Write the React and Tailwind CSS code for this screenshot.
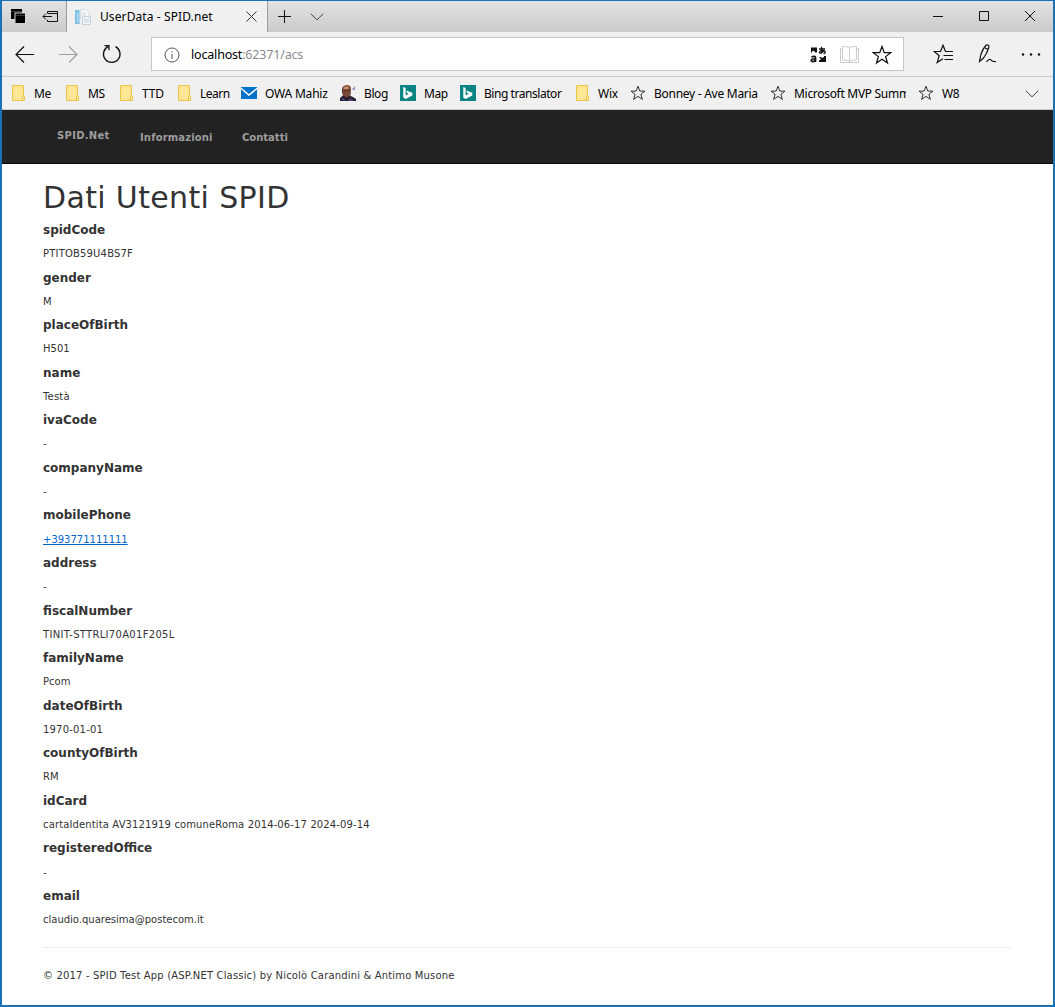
import React from 'react';

const rows = [
  ['spidCode', 'PTITOB59U4BS7F', 'tracking-[0.18px]'],
  ['gender', 'M', ''],
  ['placeOfBirth', 'H501', ''],
  ['name', 'Testà', 'tracking-[0.2px]'],
  ['ivaCode', '-', ''],
  ['companyName', '-', ''],
  ['mobilePhone', '+393771111111', ''],
  ['address', '-', ''],
  ['fiscalNumber', 'TINIT-STTRLI70A01F205L', 'tracking-[0.31px]'],
  ['familyName', 'Pcom', ''],
  ['dateOfBirth', '1970-01-01', 'tracking-[0.2px]'],
  ['countyOfBirth', 'RM', ''],
  ['idCard', 'cartaIdentita AV3121919 comuneRoma 2014-06-17 2024-09-14', 'tracking-[0.13px]'],
  ['registeredOffice', '-', ''],
  ['email', 'claudio.quaresima@postecom.it', ''],
];

const STAR = 'M8 1.2 9.8 6.1H15L10.9 9.3 12.4 14.4 8 11.4 3.6 14.4 5.1 9.3 1 6.1H6.2Z';

const Folder = () => (
  <svg width="14" height="16" viewBox="0 0 14 16" fill="#ffe694" stroke="#e9c548">
    <path d="M.5.5h11v9.7l1 1v4.3H.5Z" />
    <path d="M10.5 15.500v-4l1-1.300" fill="none" />
  </svg>
);
const Mail = () => (
  <svg width="16" height="12" viewBox="0 0 16 12">
    <path d="M0 0h16v12H0Z" fill="#0072c9" />
    <path d="M0 .4 8 7 16 .4V2.300L8 9 0 2.300Z" fill="#fff" />
    <path d="M0 0h16L8 6.500Z" fill="#0072c9" />
  </svg>
);
const Avatar = () => (
  <svg width="16" height="16" viewBox="0 0 16 16">
    <path d="M0 16v-3l3-2.500 4-.5 5 1.500 4 2.500v2Z" fill="#20202e" />
    <path d="M2 3.500Q3 0 7 0t4 4l-.3 4.500L8.500 12 5 12.500 2.500 9Z" fill="#794735" />
    <path d="M3.500 3Q5 .6 8.500 1.500L9 4 4 4.500Z" fill="#c28a68" />
    <path d="M2 4h1v6l3 2.500 3-1 1.500-3-.3 4L6 14l-3-3Z" fill="#35202a" />
    <path d="M4.500 5.500h1.500M8 5.500h1.500" stroke="#2c1c20" />
    <path d="m1 14 2-1 2 2-1 1Zm7 1 3-1.500 2 1.500v1H8Z" fill="#58427c" />
    <path d="M12.500 3h1.200V1.500H15V5h-2.500Z" fill="#8d9cc5" />
  </svg>
);
const Bing = () => (
  <svg width="16" height="16" viewBox="0 0 16 16">
    <path d="M0 0h16v16H0Z" fill="#0c8484" />
    <path d="M3.300 2 5.600 2.900v7.700l3.200-1.800-1.600-.8-1-2.400 6.100 2.200v2.700L5.600 14l-2.300-1.400Z" fill="#fff" />
  </svg>
);
const SmallStar = () => (
  <svg width="16" height="16" viewBox="0 0 16 16" fill="none" stroke="#333">
    <path d={STAR} />
  </svg>
);

const bookmarks = [
  [Folder, 'Me', 'w-[54px]', 'w-[22px]', 'tracking-[-0.35px]'],
  [Folder, 'MS', 'w-[54px]', 'w-[22px]', 'tracking-[-0.35px]'],
  [Folder, 'TTD', 'w-[58px]', 'w-[22px]', 'tracking-[-0.2px]'],
  [Folder, 'Learn', 'w-[63px]', 'w-[22px]', 'tracking-[-0.5px]'],
  [Mail, 'OWA Mahiz', 'w-[99px]', 'w-[24px]', 'tracking-[-0.2px]'],
  [Avatar, 'Blog', 'w-[60px]', 'w-[24px]', 'tracking-[-0.4px]'],
  [Bing, 'Map', 'w-[60px]', 'w-[24px]', 'tracking-[-0.4px]'],
  [Bing, 'Bing translator', 'w-[116px]', 'w-[24px]', 'tracking-[-0.45px]'],
  [Folder, 'Wix', 'w-[54px]', 'w-[22px]', 'tracking-[-0.2px]'],
  [SmallStar, 'Bonney - Ave Maria', 'w-[140px]', 'w-[24px]', 'tracking-[-0.27px]'],
  [SmallStar, 'Microsoft MVP Summ', 'w-[136px] mr-3', 'w-[24px]', 'tracking-[-0.3px]'],
  [SmallStar, 'W8', 'w-[60px]', 'w-[24px]', 'tracking-[-0.3px]'],
];

function TabStrip() {
  return (
    <div className="flex h-[31px] bg-linear-to-b from-[#e2e2e2] to-[#cbcbcb]">
      <div className="flex w-[65px] border-r border-[#9d9d9d] pl-2 pt-2">
        <svg width="16" height="15" viewBox="0 0 16 15" className="ml-px">
          <path d="M0 0h11v3.500H3.500V10H0Z" />
          <path d="M4.500 4.500H14V14H4.500Z" />
          <path d="M0 2.500h11M4.500 6.500H14" stroke="#777" strokeWidth=".5" />
        </svg>
        <svg width="18" height="14" viewBox="0 0 18 14" fill="none" stroke="#111" className="ml-[15px]">
          <path d="M5.500 4V2.500h10v10h-10V11M5.500 4.500h10M1 7.500h9M4 4.500l-3 3 3 3" />
        </svg>
      </div>
      <div className="flex w-[201px] items-center border-r border-[#9d9d9d] bg-[#f0f0f0] pl-[8px]">
        <svg width="16" height="16" viewBox="0 0 16 16">
          <path d="M0 1h4.500v14H0Z" fill="#7dbde2" />
          <path d="M1.500 3.500h2v10h-2Z" fill="#a9d8ef" />
          <path d="M5.500.5h6l3 3v6h-9Z" fill="#f4f7fa" stroke="#d3dbe2" />
          <path d="M7.500 7.500h8v8h-8Z" fill="#edf2f6" stroke="#c9d3dc" />
          <path d="M7 4h4M7 6h4M9 10.500h5M9 12.500h5" stroke="#ccd5dd" />
        </svg>
        <span className="ml-[9px] w-[146px] whitespace-nowrap text-[12px] tracking-[0.1px]">UserData - SPID.net</span>
        <svg width="11" height="11" viewBox="0 0 11 11" stroke="#333" fill="none">
          <path d="m.5.5 10 10m0-10-10 10" />
        </svg>
      </div>
      <svg width="13" height="13" viewBox="0 0 13 13" stroke="#111" className="ml-[10px] mt-[9px]">
        <path d="M0 6.500h13M6.500 0v13" />
      </svg>
      <svg width="14" height="8" viewBox="0 0 14 8" stroke="#444" fill="none" className="ml-[19px] mt-3">
        <path d="m.8.800 6.200 6 6.200-6" />
      </svg>
      <div className="ml-auto mr-[18px] mt-[10px] flex">
        <svg width="10" height="10" viewBox="0 0 10 10" stroke="#111"><path d="M0 5.500h10" /></svg>
        <svg width="10" height="10" viewBox="0 0 10 10" stroke="#111" fill="none" className="ml-9"><path d="M.5.5h9v9h-9Z" /></svg>
        <svg width="10" height="10" viewBox="0 0 10 10" stroke="#111" className="ml-9"><path d="m0 0 10 10M10 0 0 10" /></svg>
      </div>
    </div>
  );
}

function Toolbar() {
  return (
    <div className="flex h-[44px]">
      <svg width="19" height="18" viewBox="0 0 19 18" fill="none" stroke="#111" strokeWidth="1.200" className="ml-[13px] mt-[14px]">
        <path d="M19 8.500H1M9 .5l-8 8 8 8" />
      </svg>
      <svg width="19" height="18" viewBox="0 0 19 18" fill="none" stroke="#a0a0a0" strokeWidth="1.200" className="ml-[25px] mt-[14px]">
        <path d="M0 8.500h18M10 .5l8 8-8 8" />
      </svg>
      <svg width="20" height="20" viewBox="0 0 20 20" fill="none" stroke="#111" strokeWidth="1.300" className="ml-[24px] mt-3">
        <path d="M13.500 2.700A8.300 8.300 0 1 1 6 2.700M2.500 1.700H7v4.500" />
      </svg>
      <div className="ml-[29px] mt-[5px] flex h-[34px] w-[753px] items-center border border-[#c6c6c6] bg-white pl-3 pt-px">
        <svg width="16" height="16" viewBox="0 0 16 16" fill="none" stroke="#555">
          <circle cx="8" cy="8" r="7" />
          <path d="M8 6.800V12M8 4v1.300" />
        </svg>
        <span className="ml-[11px] whitespace-nowrap pt-px text-[12.500px] tracking-[-0.180px] text-black">
          localhost<span className="text-[#8c8c8c]">:62371/acs</span>
        </span>
        <div className="ml-auto mr-[11px] flex items-center">
          <svg width="17" height="17" viewBox="0 0 17 17" fill="none" stroke="#111" strokeWidth="1.300">
            <path d="M1 1.500h6v5H5l-1-2-2 1v1H1Z" fill="#111" stroke="none" />
            <path d="M9 3h6M11.500.7l.3 6.600M14 4.200c-1 2-2.500 3-4 3-1.400-1 .5-3 2.700-2.900 3 0 3.500 2.700.8 3.700" />
            <path d="M1.500 11q4-1.500 4 .8V16M5.500 12.800c-2-.1-4.200.2-4.200 1.700s3 1.800 4.200-.6" strokeWidth="1.700" />
            <path d="M9 11h2l1 1 2-1v-1h2v6H9v-1.500l2-1.200Z" fill="#111" stroke="none" />
          </svg>
          <svg width="20" height="20" viewBox="0 0 20 20" fill="none" stroke="#ccc" className="ml-[13px]">
            <path d="M9.500 2.500v14M9.500 2.500Q8 1.500 2.500 1.500v13.500Q8 15 9.500 16.500q1.500-1.500 7-1.500V1.500Q11 1.500 9.500 2.500M2.500 3.500h-2v14h18v-14h-2" />
          </svg>
          <svg width="20" height="20" viewBox="0 0 16 16" fill="none" stroke="#111" className="ml-3"><path d={STAR} /></svg>
        </div>
      </div>
      <svg width="21" height="20" viewBox="0 0 21 20" fill="none" stroke="#111" strokeWidth="1.200" className="ml-[29px] mt-3">
        <path d="M12.500 7.500 10 1.200 7.600 7.500H1.200l5 4.200-2 6.800 5.600-3.700M12 7.500h8M10.500 11.500H20M11.500 15.500H20" />
      </svg>
      <svg width="19" height="20" viewBox="0 0 19 20" fill="none" stroke="#111" strokeWidth="1.200" className="ml-6 mt-3">
        <path d="M1.500 17.500 3 10Q5 4.500 8.200 1q3.300-.5 2.600 2.500Q9 9.500 5.500 14ZM7 4l3 1.200M1.500 17.500l4-3.500M8.500 18q3-4 4.500-2t5 1.500" />
      </svg>
      <svg width="20" height="4" viewBox="0 0 20 4" fill="#111" className="ml-6 mt-[21px]">
        <circle cx="2" cy="1.500" r="1.200" /><circle cx="10" cy="1.500" r="1.200" /><circle cx="18" cy="1.500" r="1.200" />
      </svg>
    </div>
  );
}

function Bookmarks() {
  return (
    <div className="flex h-[34px] items-center border-y border-[#cacaca] pl-[10px]">
      {bookmarks.map(([Icon, label, width, iconWidth, tracking]) => (
        <div key={label} className={`flex shrink-0 items-center overflow-hidden ${width}`}>
          <span className={`shrink-0 ${iconWidth}`}><Icon /></span>
          <span className={`whitespace-nowrap pt-[2px] text-[12px] leading-5 ${tracking}`}>{label}</span>
        </div>
      ))}
      <svg width="14" height="8" viewBox="0 0 14 8" stroke="#444" fill="none" className="ml-auto mr-[14px] mt-px">
        <path d="m.8.800 6.200 6 6.200-6" />
      </svg>
    </div>
  );
}

export default function App() {
  return (
    <div className="flex h-[1007px] w-[1055px] flex-col overflow-hidden border-2 border-t border-[#1872b8] bg-white text-[#333]">
      <header className="bg-[#f0f0f0] font-['Noto_Sans',sans-serif] text-black">
        <TabStrip />
        <Toolbar />
        <Bookmarks />
      </header>
      <div className="font-['DejaVu_Sans',sans-serif] text-[10px]">
        <nav className="flex h-[54px] border-b border-[#080808] bg-[#222] pl-[55px] pt-[18px] font-bold leading-[15px] text-[#9d9d9d]">
          <a className="w-[83px] tracking-[0.3px]">SPID.Net</a>
          <a className="mt-[2px] w-[102px] tracking-[0.15px]">Informazioni</a>
          <a className="mt-[2px]">Contatti</a>
        </nav>
        <main className="ml-[41px] mr-[41px]">
          <h1 className="mt-4 h-[38px] whitespace-nowrap text-[30px] leading-[36px] tracking-[0.35px]">Dati Utenti SPID</h1>
          <dl>
            {rows.map(([term, value, tracking]) => (
              <div key={term} className="h-[47.570px]">
                <dt className="h-[24.200px] text-[12px] font-bold leading-[24px]">{term}</dt>
                <dd className={`h-[23.370px] leading-[24px] ${tracking}`}>
                  {term === 'mobilePhone' ? <a className="text-[#0066cc] underline">{value}</a> : value}
                </dd>
              </div>
            ))}
          </dl>
          <footer className="mt-[15.500px] border-t border-[#eee] pt-5 leading-[16px] tracking-[0.165px]">
            © 2017 - SPID Test App (ASP.NET Classic) by Nicolò Carandini &amp; Antimo Musone
          </footer>
        </main>
      </div>
    </div>
  );
}
